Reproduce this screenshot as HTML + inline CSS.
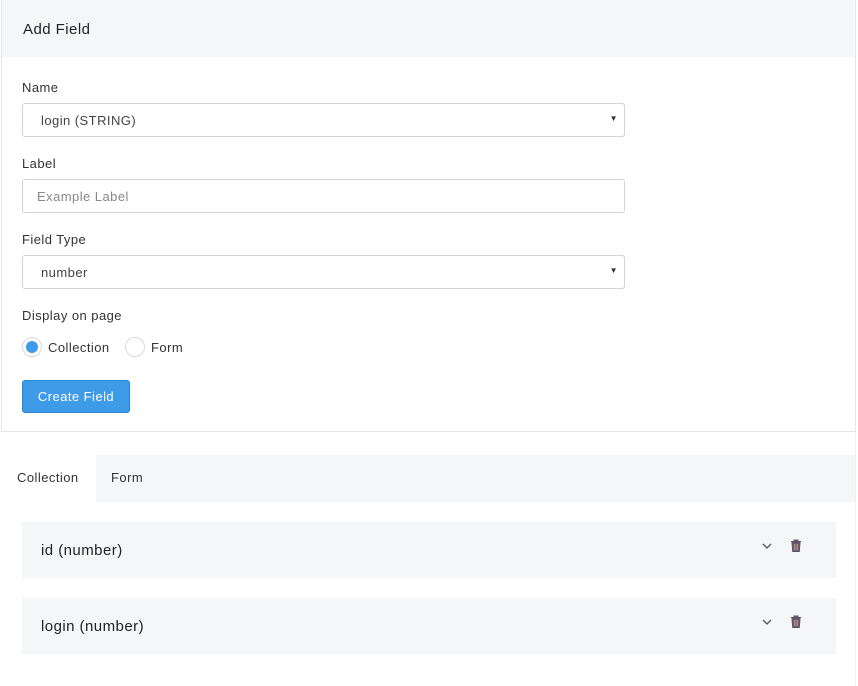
<!DOCTYPE html>
<html><head><style>
*{box-sizing:border-box;margin:0;padding:0}
body{width:858px;height:686px;background:#fff;font-family:"Liberation Sans",sans-serif;color:#333;position:relative;overflow:hidden;letter-spacing:.45px}
.card{position:absolute;left:1px;top:0;width:855px;height:432px;border:1px solid #e4e6ea;border-top:none}
.hdr{height:57px;background:#f5f6f8;padding:21px 0 0 21px;font-size:15px;color:#222}
.lbl{position:absolute;left:22px;font-size:13px;color:#333}
.inp{position:absolute;left:22px;width:603px;height:34px;border:1px solid #ced4da;border-radius:3px;font-size:13px;padding:9px 0 0 18px;color:#444}
.inp .ar{position:absolute;right:6px;top:10px;font-size:8px;color:#333}
.radio{position:absolute;width:20px;height:20px;border-radius:50%;border:1px solid #d8dadd;top:337px}
.btn{position:absolute;left:22px;top:380px;width:108px;height:33px;background:#3e9be8;border:1px solid #2b86d4;border-radius:3px;color:#fff;font-size:13px;text-align:center;line-height:31px}
.tabs{position:absolute;left:96px;top:455px;width:760px;height:47px;background:#f5f6f8}
.tab{position:absolute;top:470px;font-size:13px;color:#333}
.item{position:absolute;left:22px;width:814px;height:56px;background:#f5f6f8;font-size:15px;color:#222;padding:20px 0 0 19px}
.rb{position:absolute;left:855px;top:432px;width:1px;height:254px;background:#eef0f2}
</style></head><body>
<div class="card"><div class="hdr">Add Field</div></div>
<div class="lbl" style="top:80px">Name</div>
<div class="inp" style="top:103px">login (STRING)<span class="ar">▼</span></div>
<div class="lbl" style="top:156px">Label</div>
<div class="inp" style="top:179px;color:#888;padding-left:14px">Example Label</div>
<div class="lbl" style="top:232px">Field Type</div>
<div class="inp" style="top:255px">number<span class="ar">▼</span></div>
<div class="lbl" style="top:308px">Display on page</div>
<div class="radio" style="left:22px"><div style="position:absolute;left:3px;top:3px;width:12px;height:12px;border-radius:50%;background:#3e9be8"></div></div>
<div class="lbl" style="top:340px;left:48px">Collection</div>
<div class="radio" style="left:125px"></div>
<div class="lbl" style="top:340px;left:151px">Form</div>
<div class="btn">Create Field</div>
<div class="tabs"></div>
<div class="tab" style="left:17px">Collection</div>
<div class="tab" style="left:111px">Form</div>
<div class="rb"></div>
<div class="item" style="top:522px">id (number)</div>
<div class="item" style="top:598px">login (number)</div>
<svg style="position:absolute;left:762px;top:543px" width="10" height="6"><path d="M1 1l4 4 4-4" stroke="#555" fill="none" stroke-width="1.3"/></svg>
<svg style="position:absolute;left:762px;top:619px" width="10" height="6"><path d="M1 1l4 4 4-4" stroke="#555" fill="none" stroke-width="1.3"/></svg>
<svg style="position:absolute;left:790px;top:539px" width="12" height="13"><path d="M1 2.5h10M4 2.5V1h4v1.5M2 3.5h8l-.7 9H2.7z" fill="#6b5f6a" stroke="#5c5565" stroke-width="1"/><path d="M4.5 5v6M6 5v6M7.5 5v6" stroke="#c99" stroke-width=".7"/></svg>
<svg style="position:absolute;left:790px;top:615px" width="12" height="13"><path d="M1 2.5h10M4 2.5V1h4v1.5M2 3.5h8l-.7 9H2.7z" fill="#6b5f6a" stroke="#5c5565" stroke-width="1"/><path d="M4.5 5v6M6 5v6M7.5 5v6" stroke="#c99" stroke-width=".7"/></svg>
</body></html>
